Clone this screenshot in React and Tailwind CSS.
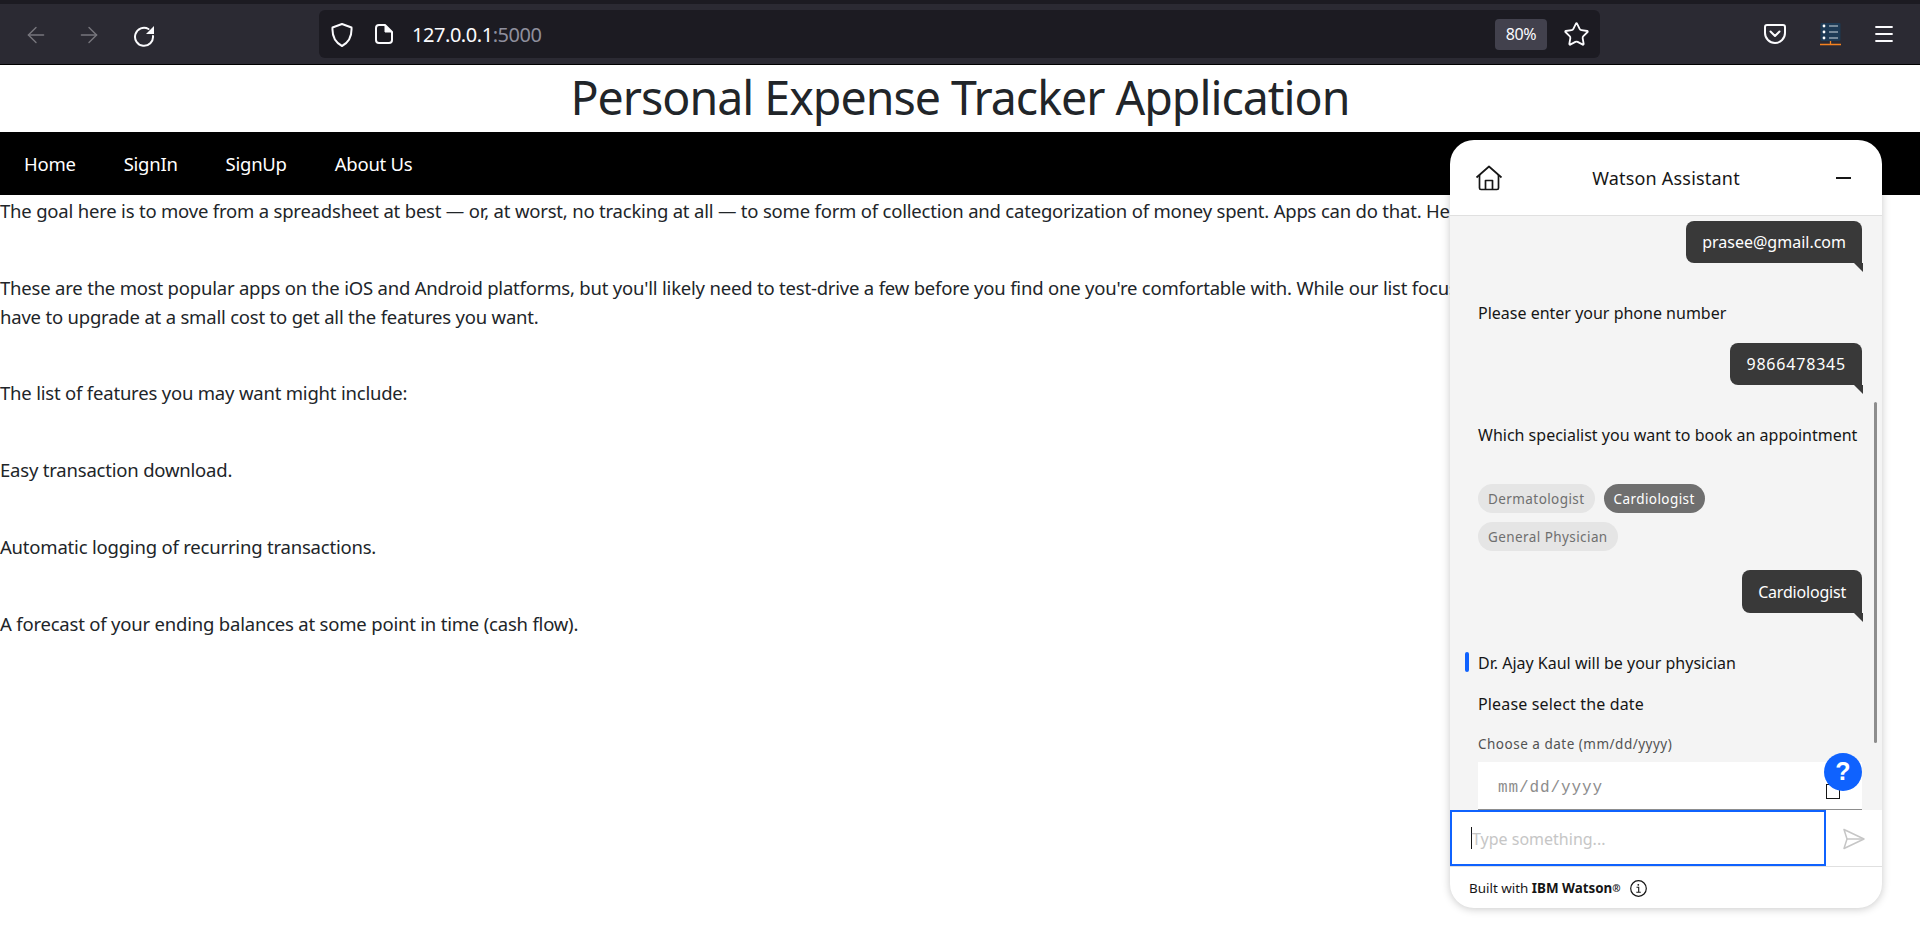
import { ArrowLeft, ArrowRight, Star, Menu } from 'lucide-react';

const ui = "font-['Noto_Sans',sans-serif]";

function Bubble({ children, className = '' }) {
  return (
    <div className={`relative self-end rounded-lg rounded-br-none bg-[#393939] px-4 text-[16px] leading-[42px] text-white ${className}`}>
      {children}
      <span className="absolute -right-px top-full h-[9px] w-[9px] bg-[#393939] [clip-path:polygon(0_0,100%_0,100%_100%)]" />
    </div>
  );
}

function Chip({ children, active }) {
  return (
    <span className={`h-[29px] rounded-full px-2.5 pt-px text-[13.5px] leading-[28px] tracking-[0.42px] ${active ? 'bg-[#6f6f6f] text-white' : 'bg-[#e5e5e5] text-[#6f6f6f]'}`}>
      {children}
    </span>
  );
}

function Toolbar() {
  return (
    <div className="h-[65px] border-b border-black bg-[#2b2a33] border-t-4 border-t-[#1c1b22] flex items-center pl-[25px] text-[#fbfbfe]">
      <ArrowLeft size={26} strokeWidth={1.3} className="-mx-0.5 mt-0.5 text-[#77767d]" />
      <ArrowRight size={26} strokeWidth={1.3} className="ml-[29px] -mr-0.5 mt-0.5 text-[#77767d]" />
      <svg width="22" height="22" viewBox="0 0 22 22" fill="none" className="ml-[33px] mt-[3px]">
        <path d="M15.5 4A9 9 0 1 0 20 11" stroke="currentColor" strokeWidth="2" strokeLinecap="round" />
        <path d="M21 1v8h-8z" fill="currentColor" />
      </svg>
      <div className="ml-[164px] flex h-12 w-[1281px] items-center rounded-md bg-[#1c1b22] pl-3">
        <svg width="22" height="24" viewBox="0 0 22 24" fill="none" className="mt-px">
          <path d="M11 1 L20.5 4.5 C21 13 18 19.5 11 23 C4 19.5 1 13 1.5 4.5 Z" stroke="currentColor" strokeWidth="2" strokeLinejoin="round" />
        </svg>
        <svg width="18" height="20" viewBox="0 0 18 20" fill="none" className="ml-[22px]">
          <path d="M4 1h6l7 7v8a3 3 0 0 1-3 3H4a3 3 0 0 1-3-3V4a3 3 0 0 1 3-3z" stroke="currentColor" strokeWidth="2" strokeLinejoin="round" />
          <path d="M10 1v7h7" fill="currentColor" stroke="currentColor" strokeWidth="1" />
        </svg>
        <span className={`ml-[19px] mt-px text-[20px] tracking-[-0.45px] ${ui}`}>
          127.0.0.1<span className="text-[#8f8f9d]">:5000</span>
        </span>
        <span className={`ml-auto flex h-[31px] w-[52px] items-center justify-center rounded bg-[#42414d] text-[16px] tracking-[-0.3px] ${ui}`}>80%</span>
        <Star size={27} strokeWidth={1.6} className="ml-4 mr-[10px]" />
      </div>
      <svg width="22" height="20" viewBox="0 0 22 20" fill="none" className="ml-[164px]">
        <path d="M3 1h16a2 2 0 0 1 2 2v6a10 10 0 0 1-20 0V3a2 2 0 0 1 2-2z" stroke="currentColor" strokeWidth="2" />
        <path d="M6.5 7.5 11 12l4.5-4.5" stroke="currentColor" strokeWidth="2" strokeLinecap="round" strokeLinejoin="round" />
      </svg>
      <svg width="21" height="23" viewBox="0 0 21 23" className="ml-[34px]">
        <rect x="0.5" y="0" width="20" height="18" rx="1" fill="#1d3a55" />
        <circle cx="4" cy="3" r="1.4" fill="#fff" />
        <circle cx="4" cy="9" r="1.4" fill="#fff" />
        <circle cx="4" cy="15" r="1.4" fill="#fff" />
        <path d="M9 3h9M9 9h9M9 15h9" stroke="#cfd8e0" strokeWidth="1" />
        <path d="M0 21.500h21M10.500 18v3" stroke="#f58220" strokeWidth="1.300" />
      </svg>
      <Menu size={24} strokeWidth={1.8} className="ml-[31px]" />
    </div>
  );
}

function Chat() {
  return (
    <div className={`absolute left-[1450px] top-[140px] flex h-[768px] w-[432px] flex-col overflow-hidden rounded-3xl bg-white shadow-[0_1px_8px_rgba(0,0,0,0.22)] ${ui}`}>
      <div className="flex h-[76px] shrink-0 items-center justify-between border-b border-[#e0e0e0] pl-[25px] pr-[31px]">
        <svg width="28" height="26" viewBox="0 0 28 26" fill="none" stroke="#161616" strokeWidth="1.700" strokeLinejoin="round">
          <path d="M1.500 12.500 14 1.500l12.500 11" />
          <path d="M4.500 10v13a1.500 1.500 0 0 0 1.500 1.500h16a1.500 1.500 0 0 0 1.500-1.500V10" />
          <path d="M10.500 24.500v-9h7v9" />
        </svg>
        <span className="mr-[7px] mt-0.5 text-[18px] tracking-[0.2px] text-[#161616]">Watson Assistant</span>
        <span className="h-0.5 w-[15px] bg-[#161616]" />
      </div>

      <div className="relative h-[594px] shrink-0 overflow-hidden bg-[#f4f4f4]">
        <div className="flex flex-col pl-7 pr-5 text-[16px] leading-6 text-[#161616]">
          <Bubble className="mt-[5px]">prasee@gmail.com</Bubble>
          <p className="mt-[38px]">Please enter your phone number</p>
          <Bubble className="mt-[18px] tracking-[0.8px]">9866478345</Bubble>
          <p className="mt-[38px] whitespace-nowrap">Which specialist you want to book an appointment</p>
          <div className="mt-[37px] flex flex-col items-start gap-[9px]">
            <div className="flex gap-[9px]">
              <Chip>Dermatologist</Chip>
              <Chip active>Cardiologist</Chip>
            </div>
            <Chip>General Physician</Chip>
          </div>
          <Bubble className="mt-[19px] pt-px tracking-[-0.2px]">Cardiologist</Bubble>
          <p className="relative mt-[37px] pt-px -mb-px">
            <span className="absolute -left-[13px] top-0.5 h-5 w-1 rounded-sm bg-[#0f62fe]" />
            Dr. Ajay Kaul will be your physician
          </p>
          <p className="mt-[17px] pt-px -mb-px tracking-[0.15px]">Please select the date</p>
          <p className="mt-5 pt-px -mb-px text-[13.5px] leading-4 tracking-[0.5px] text-[#525252]">Choose a date (mm/dd/yyyy)</p>
          <div className="mt-[11px] flex h-12 items-center border-b border-[#8d8d8d] bg-white pl-5 pr-[22px] pt-1 font-['Liberation_Mono',monospace] text-[16px] tracking-[0.9px] text-[#8d8d8d]">
            mm/dd/yyyy
            <span className="ml-auto mt-2 h-[15px] w-[14px] border-[1.500px] border-[#161616]" />
          </div>
        </div>
        <span className="absolute right-[5px] top-[186px] h-[341px] w-[3px] rounded-full bg-[#8d8d8d]" />
        <span className="absolute right-5 top-[537px] flex h-[38px] w-[38px] items-center justify-center rounded-full bg-[#0f62fe] font-['Liberation_Sans',sans-serif] text-[25px] font-bold text-white">?</span>
      </div>

      <div className="flex h-[57px] shrink-0 items-stretch border-b border-[#e0e0e0]">
        <div className="flex h-[56px] w-[376px] items-center border-2 border-[#0f62fe] pl-[19px] text-[16px] text-[#c6c6c6]">
          <span className="h-[22px] w-px bg-[#161616]" />
          <span className="mt-0.5">Type something...</span>
        </div>
        <svg width="22" height="22" viewBox="0 0 22 22" fill="none" stroke="#c6c6c6" strokeWidth="1.500" strokeLinejoin="round" className="ml-[17px] mt-px self-center">
          <path d="M1 1.500 21 11 1 20.500 4 11z" />
          <path d="M4 11h17" />
        </svg>
      </div>

      <div className="flex flex-1 items-center pl-[19px] pt-px text-[13.400px] text-[#161616]">
        Built with&nbsp;<b className="font-bold">IBM Watson</b><span className="text-[10px] font-bold">®</span>
        <svg width="17" height="17" viewBox="0 0 17 17" fill="none" stroke="#161616" className="ml-[9px]">
          <circle cx="8.500" cy="8.500" r="7.800" strokeWidth="1.200" />
          <path d="M6.500 7.200h2.200v5M6.300 12.300h4.500" strokeWidth="1.100" />
          <circle cx="8.300" cy="4.800" r="0.900" fill="#161616" stroke="none" />
        </svg>
      </div>
    </div>
  );
}

export default function App() {
  const body = `whitespace-nowrap`;
  return (
    <div className={`relative h-[946px] overflow-hidden bg-white ${ui}`}>
      <Toolbar />
      <h1 className="h-[67px] text-center text-[46.500px] leading-[64px] tracking-[-1px] text-[#212529]">
        Personal Expense Tracker Application
      </h1>
      <nav className="flex h-[63px] items-center gap-12 bg-black pl-6 text-[18.500px] tracking-[-0.25px] text-white">
        <a>Home</a>
        <a>SignIn</a>
        <a>SignUp</a>
        <a>About Us</a>
      </nav>
      <div className="flex flex-col gap-12 pt-0.5 text-[18.500px] leading-[28.800px] tracking-[-0.2px] text-[#212529]">
        <p className={body}>The goal here is to move from a spreadsheet at best — or, at worst, no tracking at all — to some form of collection and categorization of money spent. Apps can do that. Here's how.</p>
        <p className={body}>
          These are the most popular apps on the iOS and Android platforms, but you'll likely need to test-drive a few before you find one you're comfortable with. While our list focuses on free apps, you may<br />
          have to upgrade at a small cost to get all the features you want.
        </p>
        <p>The list of features you may want might include:</p>
        <p>Easy transaction download.</p>
        <p>Automatic logging of recurring transactions.</p>
        <p>A forecast of your ending balances at some point in time (cash flow).</p>
      </div>
      <Chat />
    </div>
  );
}
